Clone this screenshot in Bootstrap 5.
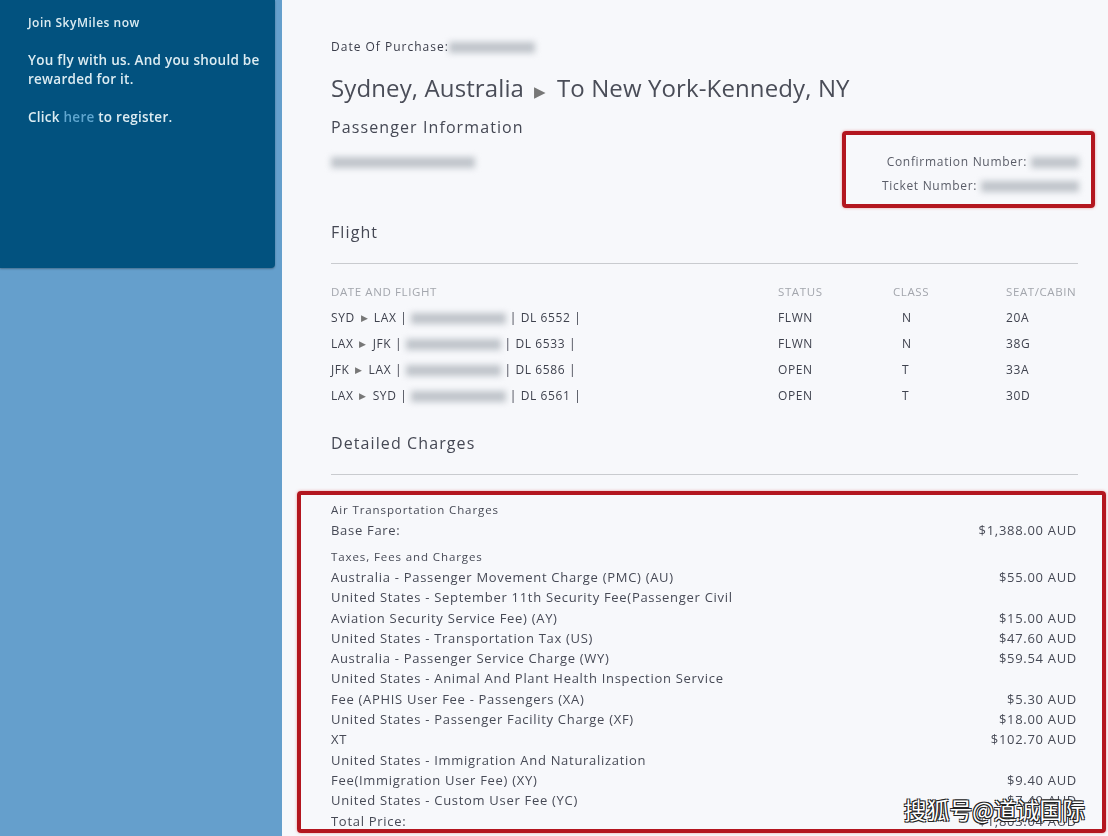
<!DOCTYPE html>
<html lang="en">
<head>
  <meta charset="UTF-8" />
  <meta name="viewport" content="width=device-width, initial-scale=1" />
  <title>Receipt</title>
  <link href="https://cdn.jsdelivr.net/npm/bootstrap@5.3.3/dist/css/bootstrap.min.css" rel="stylesheet">
  <style>
    html, body { height: 836px; overflow: hidden; }
    body { font-family: "Open Sans", "Noto Sans", sans-serif; background-color: #659fcc; color: #3a3d4a; position: relative; }
    .page-wrap { height: 836px; gap: 7px; }
    .side-panel { width: 275px; height: 268px; flex: none; background: #02527f; color: #dcecf2; padding: 15px 10px 0 28px; border-radius: 0 0 4px 0; box-shadow: 0 1px 2px rgba(0,0,0,.3); }
    .side-panel h6 { font-size: 12px; font-weight: 600; line-height: 16px; margin-bottom: 20px; letter-spacing: .5px; }
    .side-panel p { font-size: 13.5px; font-weight: 600; line-height: 19px; margin-bottom: 19px; letter-spacing: .25px; }
    .side-panel a { color: #5fa6cf; text-decoration: none; }
    .main-panel { flex: 1; min-width: 0; height: 836px; overflow: hidden; background: #f7f8fb; padding: 39px 30px 0 49px; }
    .soft-text { filter: blur(.35px); }
    .buy-line { font-size: 12px; line-height: 16px; margin-bottom: 16px; letter-spacing: 1px; }
    .route-title { font-size: 24px; font-weight: 400; line-height: 34px; margin-bottom: 8px; color: #4a4d58; letter-spacing: .12px; }
    .route-title .arr { margin: 0 4px; }
    .arr { color: #777; font-size: .62em; vertical-align: middle; }
    .sec-title { font-size: 16px; font-weight: 400; line-height: 22px; letter-spacing: 1.1px; margin: 0; color: #454854; }
    .smudge { display: inline-block; height: 11px; background: #bfc4ca; filter: blur(3px); vertical-align: middle; }
    .pass-smudge { display: block; margin-top: 19px; }
    .ref-box { width: 253px; height: 77px; flex: none; margin: 15px -17px 0 0; border: 4px solid #b3161f; border-radius: 4px; font-size: 12px; letter-spacing: .7px; padding: 15px 12px 0 0; text-align: right; color: #5a5d68; box-shadow: 0 0 3px rgba(220,60,60,.5); }
    .ref-box div { line-height: 24px; white-space: nowrap; }
    .pass-block { height: 105px; }
    .rule-line { border-top: 1px solid #c9cbcf; margin: 0; opacity: 1; }
    .flight-rule { margin: 20px 0 15px; }
    .charge-rule { margin: 20px 0 0; }
    .flight-grid { table-layout: fixed; width: 747px; margin: 0; --bs-table-bg: transparent; --bs-table-color: #3f424e; }
    .flight-grid th, .flight-grid td { padding: 0; height: 26px; font-size: 12px; letter-spacing: .6px; vertical-align: middle; white-space: nowrap; }
    .flight-grid th { font-weight: 400; color: #a3a6ad; font-size: 11.5px; }
    .flight-grid .mid { padding-left: 9px; }
    .flight-grid .arr { margin: 0 2px; font-size: .78em; }
    .charge-title { margin-top: 23px; }
    .charge-box { margin: 16px -28px 0 -34px; height: 342px; border: 4px solid #b3161f; border-radius: 4px; padding: 5px 25px 0 30px; box-shadow: 0 0 3px rgba(220,60,60,.5); overflow: hidden; font-size: 13px; letter-spacing: .7px; color: #474a56; }
    .charge-line { line-height: 20.3px; height: 20.3px; white-space: nowrap; }
    .charge-head { font-size: 11.5px; letter-spacing: .9px; }
    .gap-top { margin-top: 6.5px; }
    .mark-text { position: absolute; right: 23px; bottom: 12px; font-family: "Noto Sans CJK SC", sans-serif; font-size: 22.8px; line-height: 28px; color: #fff; text-shadow: 1px 1px 0 #222, -1px -1px 0 #222, 1px -1px 0 #222, -1px 1px 0 #222; }
  </style>
</head>
<body>
  <div class="page-wrap d-flex">
    <div class="side-panel">
      <div class="soft-text">
        <h6>Join SkyMiles now</h6>
        <p>You fly with us. And you should be rewarded for it.</p>
        <p>Click <a href="#">here</a> to register.</p>
      </div>
    </div>

    <div class="main-panel">
      <div class="soft-text">
        <div class="buy-line">Date Of Purchase:<span class="smudge" style="width: 86px"></span></div>
        <h2 class="route-title">Sydney, Australia <span class="arr">&#9654;</span> To New York-Kennedy, NY</h2>

        <div class="pass-block d-flex justify-content-between">
          <div>
            <h5 class="sec-title">Passenger Information</h5>
            <div class="smudge pass-smudge" style="width: 144px"></div>
          </div>
          <div class="ref-box">
            <div>Confirmation Number: <span class="smudge" style="width: 48px"></span></div>
            <div>Ticket Number: <span class="smudge" style="width: 98px"></span></div>
          </div>
        </div>

        <h5 class="sec-title">Flight</h5>
        <hr class="rule-line flight-rule">
        <table class="table table-borderless flight-grid">
          <thead>
            <tr><th style="width: 447px">DATE AND FLIGHT</th><th style="width: 115px">STATUS</th><th style="width: 113px">CLASS</th><th>SEAT/CABIN</th></tr>
          </thead>
          <tbody id="flightRows"></tbody>
        </table>

        <h5 class="sec-title charge-title">Detailed Charges</h5>
        <hr class="rule-line charge-rule">

        <div class="charge-box" id="chargeBox"></div>
      </div>
    </div>
  </div>

  <div class="mark-text">搜狐号@道诚国际</div>

  <script>
    const flights = [
      ['SYD', 'LAX', 95, 'DL 6552', 'FLWN', 'N', '20A'],
      ['LAX', 'JFK', 95, 'DL 6533', 'FLWN', 'N', '38G'],
      ['JFK', 'LAX', 95, 'DL 6586', 'OPEN', 'T', '33A'],
      ['LAX', 'SYD', 95, 'DL 6561', 'OPEN', 'T', '30D']
    ];
    document.getElementById('flightRows').innerHTML = flights.map(f => `
      <tr>
        <td>${f[0]} <span class="arr">&#9654;</span> ${f[1]} | <span class="smudge" style="width: ${f[2]}px"></span> | ${f[3]} |</td>
        <td>${f[4]}</td>
        <td class="mid">${f[5]}</td>
        <td>${f[6]}</td>
      </tr>`).join('');

    const charges = [
      ['Air Transportation Charges', '', 'charge-head'],
      ['Base Fare:', '$1,388.00 AUD', ''],
      ['Taxes, Fees and Charges', '', 'charge-head gap-top'],
      ['Australia - Passenger Movement Charge (PMC) (AU)', '$55.00 AUD', ''],
      ['United States - September 11th Security Fee(Passenger Civil', '', ''],
      ['Aviation Security Service Fee) (AY)', '$15.00 AUD', ''],
      ['United States - Transportation Tax (US)', '$47.60 AUD', ''],
      ['Australia - Passenger Service Charge (WY)', '$59.54 AUD', ''],
      ['United States - Animal And Plant Health Inspection Service', '', ''],
      ['Fee (APHIS User Fee - Passengers (XA)', '$5.30 AUD', ''],
      ['United States - Passenger Facility Charge (XF)', '$18.00 AUD', ''],
      ['XT', '$102.70 AUD', ''],
      ['United States - Immigration And Naturalization', '', ''],
      ['Fee(Immigration User Fee) (XY)', '$9.40 AUD', ''],
      ['United States - Custom User Fee (YC)', '$7.40 AUD', ''],
      ['Total Price:', '$1,803.04 AUD', '']
    ];
    document.getElementById('chargeBox').innerHTML = charges.map(c =>
      `<div class="charge-line d-flex justify-content-between ${c[2]}"><span>${c[0]}</span><span>${c[1]}</span></div>`
    ).join('');
  </script>
</body>
</html>
